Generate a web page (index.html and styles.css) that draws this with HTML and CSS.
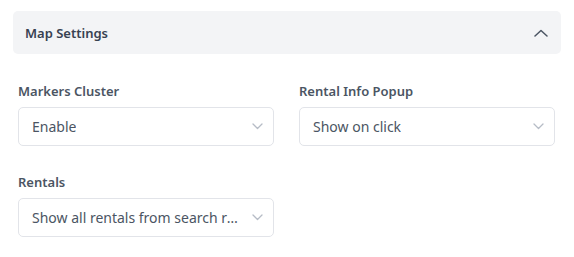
FILE: index.html
```html
<!DOCTYPE html>
<html lang="en">
<head>
    <meta charset="UTF-8">
    <meta name="viewport" content="width=device-width, initial-scale=1.0">
    <title>Map Settings</title>
    <link rel="stylesheet" href="styles.css">
</head>
<body>
    <div class="panel">
        <div class="panel-head">
            <span class="panel-title">Map Settings</span>
            <svg class="chev-up" width="14" height="8" viewBox="0 0 14 8" fill="none">
                <path d="M1 7L7 1.5L13 7" stroke="#4b5563" stroke-width="1.5" stroke-linecap="round" stroke-linejoin="round"/>
            </svg>
        </div>

        <div class="fields">
            <div class="field">
                <label>Markers Cluster</label>
                <div class="select">
                    <span class="value">Enable</span>
                    <svg class="chev" width="11" height="7" viewBox="0 0 11 7" fill="none"><path d="M1 1L5.5 5.5L10 1" stroke="#b6bcc6" stroke-width="1.3" stroke-linecap="round" stroke-linejoin="round"/></svg>
                </div>
            </div>
            <div class="field">
                <label>Rental Info Popup</label>
                <div class="select">
                    <span class="value">Show on click</span>
                    <svg class="chev" width="11" height="7" viewBox="0 0 11 7" fill="none"><path d="M1 1L5.5 5.5L10 1" stroke="#b6bcc6" stroke-width="1.3" stroke-linecap="round" stroke-linejoin="round"/></svg>
                </div>
            </div>
            <div class="field">
                <label>Rentals</label>
                <div class="select">
                    <span class="value">Show all rentals from search results</span>
                    <svg class="chev" width="11" height="7" viewBox="0 0 11 7" fill="none"><path d="M1 1L5.5 5.5L10 1" stroke="#b6bcc6" stroke-width="1.3" stroke-linecap="round" stroke-linejoin="round"/></svg>
                </div>
            </div>
        </div>
    </div>
</body>
</html>
```

FILE: styles.css
```css
body {
  margin: 0;
  background: #fff;
  font-family: "Noto Sans", "Open Sans", sans-serif;
}

.panel {
  padding: 11px 13px 0 13px;
}

.panel-head {
  display: flex;
  align-items: center;
  justify-content: space-between;
  height: 43px;
  padding: 0 13px 0 12px;
  background-color: #f3f4f6;
  border-radius: 5px;
}

.panel-title {
  font-size: 13px;
  font-weight: 600;
  color: #374151;
}

.fields {
  display: grid;
  grid-template-columns: 256px 256px;
  column-gap: 25px;
  row-gap: 27px;
  padding: 28px 6px 0 5px;
}

.field label {
  display: block;
  font-size: 13px;
  font-weight: 600;
  color: #4b5563;
  margin-bottom: 7px;
}

.select {
  box-sizing: border-box;
  display: flex;
  align-items: center;
  justify-content: space-between;
  height: 39px;
  padding: 0 10px 0 13px;
  border: 1px solid #e2e4e9;
  border-radius: 5px;
  background: #fff;
}

.value {
  font-size: 14px;
  color: #4b5563;
  white-space: nowrap;
  overflow: hidden;
  text-overflow: ellipsis;
  margin-right: 10px;
}

.chev {
  flex-shrink: 0;
}
```
